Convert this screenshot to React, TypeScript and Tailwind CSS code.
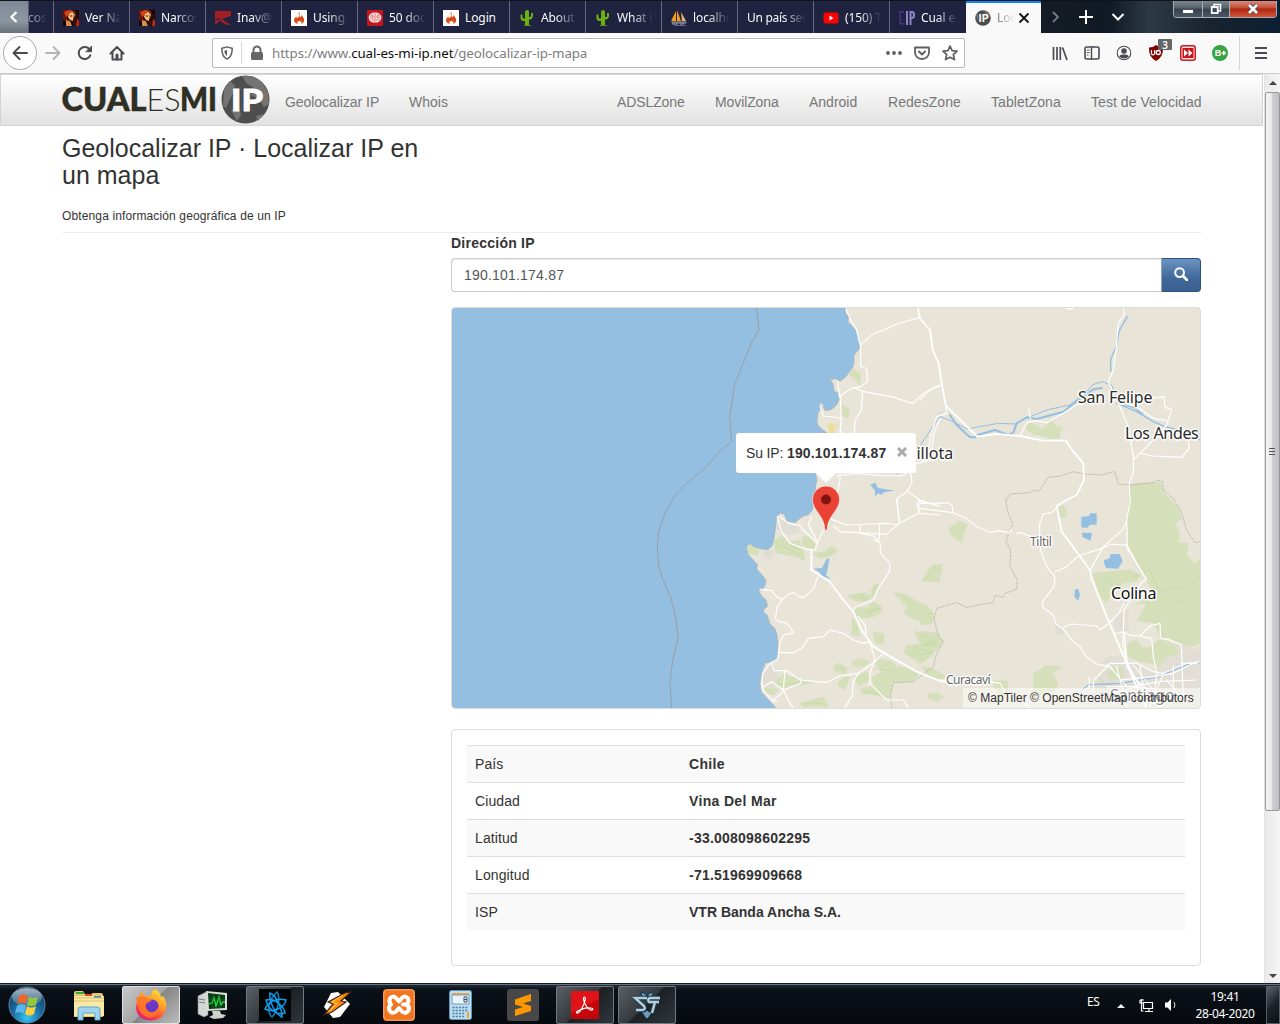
import React from "react";

type IconProps = { className?: string };

/* ---------- favicons ---------- */

const Portrait = () => (
  <svg viewBox="0 0 16 16" className="h-4 w-4 shrink-0">
    <rect width="16" height="16" fill="#1a0705" />
    <path d="M0 0h9l-4 5-1 6-4 2z" fill="#6b130a" />
    <path d="M1 2l5-2 5 1 3 4-3-2-4 1-4 3z" fill="#c8451a" />
    <path d="M6 4l3-2 3 2v4l-2 3-3-1-2-3z" fill="#f3bd78" />
    <path d="M9 1l6 4-3 4 1 6-3 1V9l2-4z" fill="#3a120a" />
    <path d="M3 10l4 1 2 5H3z" fill="#d98a4d" />
    <path d="M7 6h2M10 6h1" stroke="#4a160a" />
    <path d="M0 10l3 2v4H0z" fill="#120403" />
    <path d="M14 8l2 3v5h-3z" fill="#c02a10" />
  </svg>
);
const RedFlag = () => (
  <svg viewBox="0 0 16 16" className="h-4 w-4 shrink-0">
    <path d="M0 1h16v5L8 8.500q-1 .5 0 1.200L16 15q-5 .5-8-2L5.500 10.500 0 15z" fill="#a31d25" />
    <path d="M0 9.500l6-1.500-1 1.500-5 1z" fill="#202340" />
  </svg>
);
const Flame = () => (
  <svg viewBox="0 0 16 16" className="h-4 w-4 shrink-0">
    <rect width="16" height="16" fill="#fff" />
    <path d="M8 2c2 2-1 3 1 5 1 1 1-1 1-2 2 2 4 4 3 6-.5 2-2 2.500-3 3 1-2 0-3-1-3s-1 1-2 0c-1 1-1 2 0 3-2-.5-4-1.500-4-4 0-2 2-2 2-4 1 1 0 2 1 2C9 7 7 5 8 2z" fill="#dd4814" />
  </svg>
);
const Brain = () => (
  <svg viewBox="0 0 16 16" className="h-4 w-4 shrink-0">
    <rect width="16" height="16" rx="1" fill="#c4161c" />
    <ellipse cx="8" cy="7.500" rx="6.400" ry="5.200" fill="#fbdedd" />
    <path d="M8 2v11M3 6h3v2H3M5 4v2M13 6h-3v2h3M11 4v2M5 10h2M9 10h3" stroke="#d8565a" strokeWidth=".7" fill="none" />
  </svg>
);
const Cactus = () => (
  <svg viewBox="0 0 16 16" className="h-4 w-4 shrink-0">
    <path d="M6 16V11H4.500Q1.500 11 1.500 8V4.500h2V7q0 1.500 1.500 1.500h1V2q0-2 2-2t2 2v5h1q1 0 1-1V3h2v3.500Q13 9.500 11 9.500h-1V16z" fill="#6db012" />
    <path d="M5 15.500h7" stroke="#55900f" />
  </svg>
);
const Sails = () => (
  <svg viewBox="0 0 16 16" className="h-4 w-4 shrink-0">
    <path d="M5 1v10H0zM6 0l4 11H6z" fill="#f89c0e" />
    <path d="M10 2l5 9h-4z" fill="#e8b878" />
    <path d="M1 12h14v1H1zM1 14h3v2M6 13v3h4v-3M12 13v3h3" stroke="#9999ad" fill="none" />
  </svg>
);
const YouTube = () => (
  <svg viewBox="0 0 16 16" className="h-4 w-4 shrink-0">
    <rect x=".5" y="2.500" width="15" height="11" rx="2.500" fill="#f00" />
    <path d="M6.500 5.500v5l4-2.500z" fill="#fff" />
  </svg>
);
const CIP = () => (
  <svg viewBox="0 0 16 16" className="h-4 w-4 shrink-0" fill="none">
    <path d="M5 1.800H1.200v12H5" stroke="#4a2f8f" strokeWidth="1.600" />
    <path d="M8 1v14" stroke="#8c86c8" strokeWidth="2" />
    <path d="M11.500 15V2h1.500q2 0 2 3t-2 3h-1.500" stroke="#8c86c8" strokeWidth="2" />
  </svg>
);
const RoundIP = () => (
  <svg viewBox="0 0 16 16" className="h-4 w-4 shrink-0">
    <circle cx="8" cy="8" r="7.800" fill="#4d4d4d" />
    <path d="M9 0.500l5 3 1 4-3-1zM1 5l2-2v8z" fill="#777" />
    <text x="3.600" y="11.800" fontFamily="Lato" fontWeight="900" fontSize="10.500" fill="#fff">IP</text>
  </svg>
);

type TabData = { title: string; icon?: () => React.ReactElement };

const tabs: TabData[] = [
  { title: "Ver Nar", icon: Portrait },
  { title: "Narcos", icon: Portrait },
  { title: "Inav@tec", icon: RedFlag },
  { title: "Using C", icon: Flame },
  { title: "50 docu", icon: Brain },
  { title: "Login", icon: Flame },
  { title: "About C", icon: Cactus },
  { title: "What is", icon: Cactus },
  { title: "localhos", icon: Sails },
  { title: "Un país sera" },
  { title: "(150) Tr", icon: YouTube },
  { title: "Cual es", icon: CIP },
];

function TabStrip() {
  return (
    <div className="flex h-[33px] border-t border-[#11131c] bg-[linear-gradient(90deg,#7f8c9a_0,#8b929b_28px,#202340_29px,#202340_965px,#141b24_1041px,#101a24_1110px,#2d3943_1150px,#18232e_1210px,#0b1f33_1280px)]">
      <div className="flex w-7 items-center justify-center bg-[linear-gradient(180deg,#7d8995,#8d97a2_60%,#69727b)] text-white">
        <svg viewBox="0 0 12 16" className="h-4 w-3" fill="none" stroke="currentColor" strokeWidth="2.200"><path d="M8.500 3l-5 5 5 5" /></svg>
      </div>
      <div className="flex w-[25px] items-center overflow-hidden pt-0.5 text-[12px] text-[#9296a8] [mask-image:linear-gradient(90deg,black_30%,transparent_75%)]">cos</div>
      {tabs.map((t, i) => (
        <div key={i} className="flex w-[76px] shrink-0 items-center gap-1.5 border-l border-[#686a80] pt-0.5 pl-[9px] text-[12px] tracking-[-0.100px] text-[#f9f9fa]">
          {t.icon && <t.icon />}
          <span
            className={
              t.icon
                ? "w-[38px] overflow-hidden whitespace-nowrap pb-px " + (t.title === "Login" ? "" : "[mask-image:linear-gradient(90deg,black_40%,transparent_95%)]")
                : "w-[60px] overflow-hidden whitespace-nowrap pb-px tracking-[-0.300px] [mask-image:linear-gradient(90deg,black_60%,transparent_98%)]"
            }
          >
            {t.title}
          </span>
        </div>
      ))}
      <div className="ml-px flex w-[75px] shrink-0 items-center border-t-2 border-[#0a84ff] bg-[#f9f9fa] pl-[9px] text-[12px] text-[#222]">
        <RoundIP />
        <span className="ml-1.5 w-[18px] overflow-hidden whitespace-nowrap [mask-image:linear-gradient(90deg,#0009,transparent)]">Loca</span>
        <svg viewBox="0 0 12 12" className="ml-[3px] h-3 w-3" stroke="#111" strokeWidth="1.800"><path d="M1.500 1.500l9 9M10.500 1.500l-9 9" /></svg>
      </div>
      <div className="flex w-[132px] shrink-0 items-center pl-[9px]">
        <svg viewBox="0 0 12 16" className="h-4 w-3" fill="none" stroke="#737b84" strokeWidth="1.800"><path d="M3 3l5 5-5 5" /></svg>
        <svg viewBox="0 0 16 16" className="ml-[16px] h-4 w-4" stroke="#fff" strokeWidth="2"><path d="M8 1v14M1 8h14" /></svg>
        <svg viewBox="0 0 16 16" className="ml-[16px] h-4 w-4" fill="none" stroke="#fff" strokeWidth="2"><path d="M2.500 5l5.500 5.500L13.500 5" /></svg>
      </div>
      <div className="flex h-[17px] w-[104px] shrink-0 overflow-hidden rounded-b-[4px] border border-t-0 border-[#a7afb6]">
        <div className="flex w-[29px] items-center justify-center border-r border-[#a7afb6] bg-[linear-gradient(180deg,#7b858d,#566069_45%,#343f49_50%,#4b5864)]">
          <div className="mt-1 h-[5px] w-[12px] rounded-[1px] border border-[#4a4f55] bg-white" />
        </div>
        <div className="flex w-[27px] items-center justify-center border-r border-[#a7afb6] bg-[linear-gradient(180deg,#7b858d,#566069_45%,#343f49_50%,#4b5864)]">
          <svg viewBox="0 0 12 12" className="h-3 w-3" fill="none"><path d="M4 4V1.500h6.500V8H8" stroke="#fff" strokeWidth="1.600" /><rect x="1.700" y="4" width="6" height="6" stroke="#fff" strokeWidth="1.800" /></svg>
        </div>
        <div className="flex flex-1 items-center justify-center bg-[linear-gradient(180deg,#d98c7c,#c4503a_42%,#ad2810_50%,#d5533a)]">
          <svg viewBox="0 0 14 12" className="h-3 w-3.5"><path d="M3 2l8 8M11 2l-8 8" stroke="#53424a" strokeWidth="4.200" /><path d="M3 2l8 8M11 2l-8 8" stroke="#fff" strokeWidth="2.600" /></svg>
        </div>
      </div>
    </div>
  );
}

/* ---------- toolbar ---------- */

const Slot = ({ children }: { children: React.ReactNode }) => <div className="relative flex w-8 shrink-0 items-center justify-center">{children}</div>;

const Glyph = ({ children, className = "h-4 w-4" }: IconProps & { children: React.ReactNode }) => (
  <svg viewBox="0 0 16 16" className={className} fill="none" stroke="currentColor" strokeWidth="2" strokeLinecap="round" strokeLinejoin="round">
    {children}
  </svg>
);

function Toolbar() {
  return (
    <div className="flex h-[41px] items-center border-b border-[#ccc] bg-[#f9f9fa] text-[#4a4a4f]">
      <div className="ml-[3px] flex h-[34px] w-[34px] shrink-0 items-center justify-center rounded-full border border-[#aaa] bg-white">
        <Glyph><path d="M15 8H1.500M7.500 2l-6 6 6 6" /></Glyph>
      </div>
      <Slot><Glyph className="h-4 w-4 text-[#b5b5b7]"><path d="M1 8h13.500M8.500 2l6 6-6 6" /></Glyph></Slot>
      <Slot><Glyph><path d="M13.300 10.300A6 6 0 1 1 12.600 4.500" /><path d="M14.500 1.500v5.200H9.300z" fill="currentColor" strokeWidth="1" /></Glyph></Slot>
      <Slot><Glyph><path d="M1.500 8.500L8 2l6.500 6.500M3.500 8v6.500h9V8M8 14v-3.500" /><path d="M8 10v4" strokeWidth="3" /></Glyph></Slot>
      <div className="ml-[79px] flex h-[30px] w-[753px] shrink-0 items-center rounded-[2px] border border-[#b8b8bc] bg-white">
        <div className="flex w-[28px] items-center justify-center text-[#5f5f63]">
          <Glyph className="h-[14px] w-[14px]"><path d="M8 1c2 1 4 1.300 6 1.500C14 8 13 12.500 8 15 3 12.500 2 8 2 2.500 4 2.300 6 2 8 1z" strokeWidth="1.700" /><path d="M8 4.500v7c-2-1.500-3-3.500-3-6z" fill="currentColor" stroke="none" /></Glyph>
        </div>
        <div className="h-[22px] w-px bg-[#d7d7db]" />
        <div className="flex w-[29px] items-center justify-center text-[#666]">
          <svg viewBox="0 0 16 16" className="h-4 w-4"><rect x="2" y="7" width="12" height="8" rx="1.500" fill="currentColor" /><path d="M4.500 8V5a3.500 3.500 0 0 1 7 0v3" fill="none" stroke="currentColor" strokeWidth="2" /></svg>
        </div>
        <div className="flex-1 pt-0.5 pl-px text-[13.300px] tracking-[-0.090px] text-[#7d7d7f]">
          https://www.<span className="text-[#0c0c0d]">cual-es-mi-ip.net</span>/geolocalizar-ip-mapa
        </div>
        <div className="flex w-[28px] justify-center"><svg viewBox="0 0 16 16" className="h-4 w-4" fill="#5f5f63"><circle cx="2" cy="8" r="1.900" /><circle cx="8" cy="8" r="1.900" /><circle cx="14" cy="8" r="1.900" /></svg></div>
        <div className="flex w-[28px] justify-center text-[#5f5f63]"><Glyph><path d="M1 2.500h14v5a7 6.500 0 0 1-14 0z" strokeWidth="1.800" /><path d="M5 6.500l3 3 3-3" /></Glyph></div>
        <div className="flex w-[28px] justify-center text-[#5f5f63]"><Glyph><path d="M8 1l2.100 4.700 5 .5-3.800 3.400 1.200 5L8 12.200l-4.500 2.400 1.200-5L1 6.200l5-.5z" strokeWidth="1.700" /></Glyph></div>
      </div>
      <div className="ml-[79px] flex h-full">
        <Slot><svg viewBox="0 0 16 16" className="h-4 w-4" stroke="currentColor" strokeWidth="1.700"><path d="M1.500 2v13M5 2v13M8.300 2v13M10.500 2.500L15 15" /></svg></Slot>
        <Slot><Glyph><rect x="1" y="2" width="14" height="12" rx="1.500" strokeWidth="1.600" /><path d="M7.500 2v12" strokeWidth="1.400" /><path d="M3.200 5h2M3.200 7.500h2M3.200 10h1" strokeWidth=".9" /></Glyph></Slot>
        <Slot><Glyph><circle cx="8" cy="8" r="6.800" strokeWidth="1.100" /><circle cx="8" cy="6" r="2.800" fill="currentColor" stroke="none" /><path d="M3.300 11.500q1-2 3-2h3.400q2 0 3 2Q11 13.600 8 13.600t-4.700-2.100z" fill="currentColor" stroke="none" /></Glyph></Slot>
        <Slot>
          <svg viewBox="0 0 16 16" className="h-4 w-4"><path d="M8 0q3 2.500 7 2.500Q15.500 12 8 16 .5 12 1 2.500 5 2.500 8 0z" fill="#800000" /><path d="M3.500 5v3.200a1.600 1.600 0 0 0 3.200 0V5" fill="none" stroke="#fff" strokeWidth="1.200" /><circle cx="10.300" cy="7.500" r="2" fill="none" stroke="#fff" strokeWidth="1.300" /></svg>
          <span className="absolute top-[6px] left-[18px] flex h-[11px] w-[14px] items-center justify-center rounded-[1px] bg-[#666] text-[10px] font-semibold leading-none text-white">3</span>
        </Slot>
        <Slot><svg viewBox="0 0 16 16" className="h-4 w-4"><rect width="16" height="16" rx="3" fill="#d0191e" /><rect x="1.500" y="1.500" width="13" height="13" rx="1.500" fill="#efe2e1" /><rect x="2.500" y="3" width="11" height="10" fill="#c3161b" /><path d="M4 4.500l4 3.500-4 3.500zM8.500 4.500l4 3.500-4 3.500z" fill="#fff" /></svg></Slot>
        <Slot><svg viewBox="0 0 16 16" className="h-4 w-4"><circle cx="8" cy="8" r="8" fill="#38a343" /><text x="2.800" y="11.300" fontFamily="Liberation Sans" fontWeight="700" fontSize="9" fill="#fff">B</text><path d="M11.800 5.800v4.400M9.600 8H14" stroke="#fff" strokeWidth="1.500" /></svg></Slot>
        <div className="mt-[3px] ml-[3px] h-[34px] w-px shrink-0 bg-[#d7d7db]" />
        <div className="flex w-[40px] shrink-0 items-center justify-center pl-0.5"><svg viewBox="0 0 12 12" className="h-3 w-3" stroke="currentColor" strokeWidth="2"><path d="M0 1h12M0 6h12M0 11h12" /></svg></div>
      </div>
    </div>
  );
}

/* ---------- site header ---------- */

function SiteNav() {
  return (
    <nav className="flex h-[52px] w-[1263px] items-center border border-[#d4d4d4] bg-[linear-gradient(180deg,#fff,#e2e2e2)] text-[14px] text-[#777]">
      <svg viewBox="62 75 208 50" className="ml-[61px] h-[50px] w-[208px] shrink-0" fontFamily="Lato">
        <g fill="#2f2f24" stroke="#2f2f24">
          <text x="61.500" y="111.300" fontSize="31.500" fontWeight="900" strokeWidth=".5" textLength="85" lengthAdjust="spacingAndGlyphs">CUAL</text>
          <text x="146.500" y="111.300" fontSize="31.500" fontWeight="300" strokeWidth="0" textLength="34" lengthAdjust="spacingAndGlyphs">ES</text>
          <text x="180" y="111.300" fontSize="31.500" fontWeight="900" strokeWidth=".5" textLength="37" lengthAdjust="spacingAndGlyphs">MI</text>
        </g>
        <circle cx="245.500" cy="99.500" r="24" fill="#4e4e4e" />
        <path d="M242 76l10 0 10 6 6 10 1 12-5 3-5-8-8-4 2-8-6-3zM224 90l6-9 5 5-3 9-6 13-3-2zM231 110l8-3 2 8-4 6zM256 116l8-2-6 7z" fill="#747474" />
        <text x="231" y="110.500" fontSize="31" fontWeight="900" fill="#fff" stroke="#fff" strokeWidth=".8" textLength="32" lengthAdjust="spacingAndGlyphs">IP</text>
      </svg>
      <div className="ml-[15px] flex pt-1">
        <a className="w-[124px] tracking-[-0.050px]">Geolocalizar IP</a>
        <a>Whois</a>
      </div>
      <div className="ml-auto grid grid-cols-[98px_94px_79px_103px_100px_111px] pt-1 pr-[60px] whitespace-nowrap">
        <a className="tracking-[-0.100px]">ADSLZone</a>
        <a className="tracking-[-0.100px]">MovilZona</a>
        <a>Android</a>
        <a className="tracking-[0.050px]">RedesZone</a>
        <a className="tracking-[0.050px]">TabletZona</a>
        <a className="tracking-[0.050px]">Test de Velocidad</a>
      </div>
    </nav>
  );
}

/* ---------- map ---------- */

function MapView() {
  return (
    <div className="relative h-[402px] overflow-hidden rounded-[4px] border border-[#ddd]">
      <svg viewBox="-564 24 2244 1200" className="block h-[400px] w-[748px]" fill="none" strokeLinejoin="round" strokeLinecap="round">
        <rect x="-564" y="24" width="2244" height="1200" fill="#94bfe1" />
        <path
          d="M615 20L617 42 626 47 624 65 636 77 646 90 654 108 658 128 657 148 648 158 642 166 642 188 638 202 624 222 614 234 600 244 588 236 570 240 580 252 582 274 594 278 599 296 590 314 576 328 556 332 550 322 550 312 544 308 538 310 544 326 534 338 531 368 537 380 550 390 562 400 556 430 536 460 530 500 526 520 531 540 526 560 528 580 520 600 518 630 505 644 490 648 474 660 465 668 445 670 438 656 432 642 422 640 410 648 407 680 402 716 396 738 384 749 366 747 340 741 325 732 320 745 325 764 340 780 352 794 350 808 366 824 378 842 374 860 364 870 355 872 365 888 378 900 383 918 372 928 370 936 382 946 390 972 404 985 410 1000 414 1030 412 1074 398 1086 372 1090 376 1102 364 1124 360 1150 364 1176 378 1192 392 1206 412 1228H1684V20z"
          fill="#e8e4d8" stroke="#a9b4b3" strokeWidth="2"
        />

        {/* maritime boundary */}
        <path d="M349 24L357 88 333 132 284 252 269 354 275 424 236 456 192 508 152 538 108 582 76 636 55 698 52 750 56 796 68 838 93 892 106 950 115 1010 98 1082 90 1148 95 1226" stroke="#999" strokeWidth="2.500" />

        {/* built-up areas */}
        <g fill="#e0ddd5">
          <path d="M880 344l30-12v20zM420 660l50 10 10 26-40 10-30-20zM370 750l30 4-4 22-30-8zM370 1100l30-4 20 40-20 40-34-20z" />
          <g transform="translate(840 600)">
            <path d="M590 345L625 330 625 390 590 395 580 370zM402 375L432 380 430 405 410 403zM540 490L570 468 620 470 600 495zM530 540L570 495 650 490 700 515 760 430 800 440 840 450 840 626 530 626 500 590z" opacity=".85" />
          </g>
        </g>

        {/* vegetation */}
        <g fill="#d5dfba">
          <path d="M640 204l22 18v36l-34-34zM603 312l28 16-8 28-18-12z" />
          <path d="M1156 384L1170 364 1190 376 1206 388 1222 372 1236 360 1248 378 1268 384 1258 400 1262 416 1230 416 1210 408 1180 404z" />
          <g transform="translate(0 600)">
            <path d="M320 140L332 132 344 144 360 150 354 166 326 162zM402 122L426 106 444 126 478 120 492 150 496 182 470 172 406 158zM488 106L512 112 526 130 524 152 486 136zM514 160L556 154 576 136 594 154 574 168 538 176z" />
            <path d="M622 286L660 278 692 284 700 254 718 250 716 274 694 296 668 306 640 302zM650 322L680 322 700 304 728 320 722 340 700 352 650 358 638 340zM636 352L650 366 660 410 634 404zM700 396L734 400 732 434 706 430 700 410zM758 276L794 282 830 302 866 320 884 358 872 374 820 358 790 340 800 322zM820 392L860 402 898 400 900 440 840 492 790 458 800 436 840 432zM846 244L864 206 900 192 900 246zM578 498L598 488 622 508 618 522 586 516zM636 484L664 474 692 486 670 500 640 500zM594 548L612 530 630 532 614 570 594 560zM642 534L680 512 690 534 680 550 656 558zM716 476L756 482 770 500 796 500 826 514 840 518 820 544 758 550 748 600 700 560 696 532 724 516 708 492zM404 548L430 520 450 528 520 550 470 556 426 566zM372 562L416 568 402 586 376 580zM478 608L500 606 520 596 550 590 560 606 566 622 490 620zM662 564L700 558 736 580 738 594 700 584 668 582zM862 584L890 578 900 580 900 606 870 598z" />
          </g>
          <g transform="translate(840 600)">
            <path d="M630 -44L660 -52 720 -55 735 -20 775 25 785 55 765 75 780 95 775 125 805 130 800 165 825 190 840 175V430L815 440 780 435 740 410 725 420 700 370 650 362 680 310 640 315 700 285 680 240 625 150 620 60z" />
            <path d="M416 20L430 14 442 40 436 54 420 50 412 34zM86 84L118 62 142 74 124 128 94 108zM6 240L34 196 68 192 66 220 40 246zM0 312L38 330 42 362 20 374 0 374zM0 394L50 398 74 424 44 440 34 470 0 492zM516 220L630 208 665 228 640 248 610 250 570 288 562 310 540 290zM340 520L378 496 430 500 396 518 416 550 400 580 380 574 340 600zM620 432L650 418 666 442 690 442 724 414 760 436 780 458 730 480 720 500 690 490 660 486 620 468zM20 582L44 578 78 592 46 602zM216 542H264V582L240 596zM560 512L612 500 608 540 570 538zM0 498L30 502 74 524 74 540 30 532z" />
          </g>
        </g>
        <g transform="translate(0 600)" stroke="#bdd796" strokeWidth="1.500">
          <path d="M404 125L470 160 490 178M440 130L480 150M540 168L580 155M640 290L684 298 664 284 710 262M660 340L720 325 680 345 708 318M790 290L854 340 880 342M830 400L890 430 820 440 880 460 810 464M590 505h30M704 505L764 515 724 545M490 610h60M660 570l70 18M636 366l20 24M854 240L884 205 M410 555L480 548" />
          <path d="M1480 230L1530 210 1560 280 1600 260 1630 270 1680 230M1600 300L1650 320M1370 520l20 30" />
          <path d="M850 402l40 18-36 12 50 6M1400 225l70 60M1392 230l40 40" />
        </g>
        <path d="M564 372l14-4 4 10 16-6-16 18v10h-16z" fill="#ebdf98" />

        {/* water */}
        <path d="M690 554l16-6 8 16 50 8-30 4-10 8-10-4-8 10-2-20zM736 520l20 8 24-8-20 10zM520 806l26-2 14-28 8 0-6 36-4 14 14 10-24-6-10-14z" fill="#94bfe1" />
        <path transform="translate(840 600)" d="M484 50l24-2 2-8h20v34l-20 0-8 10-18-2zM486 98l30 0-4 24-24-10zM552 180l16-4 4-14h26l10 22-14 22-36-2-6-14zM464 270l10-4 6 18-6 18-10-10z" fill="#94bfe1" />
        <g transform="translate(840 0)" stroke="#94bfe1">
          <path d="M2 434L45 370 60 350 100 365 140 387 235 370 285 372 310 358 380 330 450 315 500 275 520 253 548 245 575 255 590 300" strokeWidth="3" />
          <path d="M90 345L110 375 150 412H166L172 405 225 390 265 405 280 398 290 370 320 352 350 357 430 335 475 300 520 268 545 264" strokeWidth="6" />
          <path d="M590 310L650 335 700 365 735 380 760 386 840 420M600 312L640 322 668 342M572 214V178L588 142 598 92 622 50" strokeWidth="4" />
          <path d="M480 1178L506 1154 560 1152 600 1150 720 1130 760 1110 820 1088H840" strokeWidth="4" />
        </g>

        {/* administrative boundaries */}
        <g transform="translate(840 0)" stroke="#b5b4a7" strokeWidth="2.500" strokeDasharray="6 5">
          <path d="M258 600L270 582 330 578 340 570 355 575 385 532 420 528 460 515 495 522 540 525 585 515 595 552 630 555 700 548 710 540 728 545 730 570 760 595 780 630 785 640 800 690 825 728 840 725" />
          <path d="M258 600L262 630 278 675 268 690 258 725 272 750 270 800 292 840 290 868 255 880 250 892 225 885 218 908 190 912 140 922 110 908 50 925 42 955 55 1010 70 1025 50 1060 40 1100 0 1130 -20 1145 -80 1148 -88 1180 -85 1226" />
        </g>

        {/* minor roads */}
        <g stroke="#fff" strokeWidth="3.500">
          <path d="M618 28L634 64 650 90 658 126 662 134 702 100 726 92 770 72 840 52M662 136V198L680 206 683 244 663 260 638 264 608 282 598 292 594 244M640 264L670 274 730 286 756 290 790 302 820 310 850 280 900 256M668 274L664 330 646 360 642 400M600 284L604 354 600 396M540 318L550 348 606 354M604 392L600 540 592 580" />
          <path d="M590 528L650 520 740 528 790 526 830 490 870 480 882 400 900 356M812 520L816 548 800 576 770 596 778 660M800 572L840 600 890 616" />
          <g transform="translate(0 600)">
            <path d="M580 78L600 95 740 103 775 72 835 40 838 0M575 58L620 75 690 72 740 70 772 75M770 0L778 70M412 50L425 95 450 130 500 148 525 150 532 130 490 90 480 76 445 70 420 50M515 50L505 75 525 110 532 130 550 90 M660 72V95M718 75V98M830 10L840 40 900 45M832 2L900 18" />
            <path d="M660 100L700 108 720 128 722 160 750 190 748 215 715 265 700 300 650 320 636 332M720 98L715 125 700 120" />
            <path d="M360 268L395 272 412 292 428 298 445 283 462 278 475 290 490 293 520 268 530 240 535 228M428 298L412 320 406 355 415 365 440 368 460 398 430 405 420 430 416 458 462 458 490 440 505 415 550 410 570 390 610 400 640 420 670 430 690 425M416 460L412 478 390 490 368 520 366 565 395 600 410 605 M395 490L402 512 440 512 480 540 560 547 600 528 655 520 705 485 730 460M655 520L640 545 636 590 615 622M690 430L705 475 690 520 690 550 715 575 740 600 790 600 805 622M435 512L430 570 445 600 458 622M482 535V550L430 570 395 545 370 560M430 575L395 605" />
            <path d="M655 350L676 376 678 410" />
          </g>
          <g transform="translate(840 0)">
            <path d="M0 300L30 268 66 254M78 318L80 340 50 350 34 400 20 480 0 490M300 408L320 368 350 362 380 368 430 340 480 308M326 326L332 356M610 24L612 45 595 70 588 150 580 210 565 245 600 320 625 380 640 470 640 520 628 550 630 600M640 480L660 460 700 420 740 375 755 328 735 322 732 290 690 296M660 460L700 468 785 472 808 445 806 425M600 306L650 320 700 355 738 362M435 24L450 28 462 24" />
          </g>
          <g transform="translate(840 600)">
            <path d="M0 10H50L85 8 98 20V38L0 25M98 38L140 55 170 80 210 97 235 92 268 98 275 88M290 100L300 98 330 108 360 115" />
            <path d="M410 22L395 38 370 42 358 75 362 150 380 200 405 230 402 260 368 305 368 322 400 345 408 372 430 388 460 425 480 440 500 472 530 492 570 500M430 382L455 372 530 378 540 390 568 370 600 335 612 310M405 215L440 200 475 168 545 145 575 133 620 135M620 66L605 92 550 140 510 210" />
            <path d="M632 -4L620 60 622 145 672 225 680 238 666 245 630 300 612 330 610 400 608 430 620 490M582 402L610 395 630 406 660 408 690 378 720 370 722 415 750 420 784 434 786 490 830 490M660 408L695 415 700 470 710 520 705 570M508 532V560L480 580M522 540L570 490 650 490 700 515 730 520 800 490 840 485" />
            <path d="M570 500L620 560 700 566M600 540L700 530 760 520 820 490M560 560H640L720 545 830 540M620 500L650 540 690 575M640 495L700 570M660 500L680 620M590 500L620 620M730 520L690 620M760 500V570L700 610M786 490L790 600M740 540L800 610M550 590L640 600 700 590M600 580L640 560" />
            <path d="M60 540H100M210 545L240 550 256 580 300 600 330 625M520 545V575" />
          </g>
        </g>

        {/* highways */}
        <g stroke="#fff" strokeWidth="5.500">
          <path d="M833 20L840 55 870 90 878 150 896 190 905 250 918 318 1012 410 1070 402 1140 408 1210 422 1278 422 1295 448 1330 490 1332 540 1310 585 1280 600 1250 618 1265 695 1350 810 1355 835 1400 950 1460 1090 1490 1160 1520 1226" />
          <path d="M515 750L514 810 570 845 610 900 640 935 665 990 700 1040 760 1075 830 1115 900 1143 960 1150" />
          <path d="M1460 735L1510 825M1452 1000L1462 1090 1500 1160" strokeWidth="4" />
        </g>
      </svg>

      {/* place names */}
      <div className="absolute inset-0 font-['Noto_Sans'] leading-none whitespace-nowrap text-[#2b2b2b] [text-shadow:0_0_2px_#fff,0_0_3px_#fff,1.500px_0_1px_#fff,-1.500px_0_1px_#fff,0_1.500px_1px_#fff,0_-1.500px_1px_#fff,1px_1px_1px_#fff,-1px_-1px_1px_#fff]">
        <span className="absolute top-[81px] left-[626px] text-[16px] tracking-[-0.200px]">San Felipe</span>
        <span className="absolute top-[117px] left-[673px] text-[16px] tracking-[-0.350px]">Los Andes</span>
        <span className="absolute top-[137px] left-[442px] text-[16px]">Quillota</span>
        <span className="absolute top-[277px] left-[659px] text-[16px] tracking-[-0.300px] text-[#111]">Colina</span>
        <span className="absolute top-[228px] left-[578px] text-[12px] tracking-[-0.300px] text-[#666]">Tiltil</span>
        <span className="absolute top-[366px] left-[494px] text-[12px] tracking-[-0.500px] text-[#666]">Curacaví</span>
        <span className="absolute top-[379px] left-[658px] text-[16px] tracking-[-0.200px] text-[#222]">Santiago</span>
      </div>

      <div className="absolute right-0 bottom-0 h-5 w-[237px] bg-white/50 pl-[5px] text-[12px] leading-5 tracking-[0.030px] whitespace-nowrap text-[#333]">
        © MapTiler © OpenStreetMap contributors
      </div>

      <svg viewBox="0 0 28 46" className="absolute top-[177px] left-[360px] h-[46px] w-7">
        <path d="M14 45.800q-1.200 0-1.400-3C12 31 .4 25 .4 14.500a13.600 13.600 0 0 1 27.200 0C27.600 25 16 31 15.400 42.800q-.2 3-1.400 3z" fill="#ea4335" stroke="#fff" strokeWidth=".6" />
        <circle cx="14" cy="14.500" r="5" fill="#811411" />
      </svg>
      <div className="absolute top-[125px] left-[284px] flex h-10 w-[180px] items-center rounded-[3px] bg-white pl-[10px] text-[14px] text-[#333]">
        <span className="tracking-[-0.150px]">Su IP:&nbsp;</span>
        <b className="tracking-[0.150px]">190.101.174.87</b>
        <svg viewBox="0 0 12 12" className="mb-0.5 ml-[10px] h-3 w-3" stroke="#aaa" strokeWidth="3"><path d="M2 2l8 8M10 2l-8 8" /></svg>
        <svg viewBox="0 0 20 10" className="absolute top-full left-[80px] h-[10px] w-5"><path d="M0 0h20L10 10z" fill="#fff" /></svg>
      </div>
    </div>
  );
}

const rows: [string, string, string][] = [
  ["País", "Chile", "tracking-[0.300px]"],
  ["Ciudad", "Vina Del Mar", "tracking-[0.340px]"],
  ["Latitud", "-33.008098602295", "tracking-[0.230px]"],
  ["Longitud", "-71.51969909668", "tracking-[0.230px]"],
  ["ISP", "VTR Banda Ancha S.A.", ""],
];

function Content() {
  return (
    <main className="pl-[62px] text-[#333]">
      <div className="h-[107px] w-[1140px] border-b border-[#eee]">
        <h1 className="w-[370px] pt-[9px] text-[25px] leading-[27px]">Geolocalizar IP · Localizar IP en un mapa</h1>
        <p className="mt-[19px] text-[12px] leading-[17px] tracking-[0.130px]">Obtenga información geográfica de un IP</p>
      </div>
      <div className="ml-[389px] w-[750px]">
        <label className="block h-[25px] text-[14px] leading-5 font-bold tracking-[0.240px]">Dirección IP</label>
        <div className="flex h-[34px]">
          <div className="flex flex-1 items-center rounded-l-[4px] border border-r-0 border-[#ccc] pl-3 text-[14px] tracking-[0.200px] text-[#555] shadow-[inset_0_1px_1px_rgba(0,0,0,0.075)]">190.101.174.87</div>
          <button className="flex w-10 items-center justify-center rounded-r-[4px] border border-l-[#8fa5bd] border-y-[#2b5080] border-r-[#2b5080] bg-[linear-gradient(180deg,#6b94c1,#40699b_60%,#3b6091)] pb-0.5">
            <svg viewBox="0 0 14 14" className="h-[14px] w-[14px]" fill="none" stroke="#fff"><circle cx="5.600" cy="5.600" r="4.400" strokeWidth="2" /><path d="M9 9l4 4" strokeWidth="2.600" strokeLinecap="round" /></svg>
          </button>
        </div>
        <div className="pt-[15px]"><MapView /></div>
        <div className="mt-5 h-[237px] rounded-[4px] border border-[#ddd] p-[15px] text-[14px]">
          {rows.map(([k, v, spacing], i) => (
            <div key={k} className={"flex h-[37px] items-center border-t border-[#ddd] px-2 " + (i % 2 ? "bg-white" : "bg-[#f9f9f9]")}>
              <span className="w-[214px] tracking-[0.100px]">{k}</span>
              <b className={spacing}>{v}</b>
            </div>
          ))}
        </div>
      </div>
    </main>
  );
}

function Scrollbar() {
  return (
    <div className="flex w-4 flex-col items-center border-l border-[#e3e3e3] bg-[linear-gradient(90deg,#e9e9e9,#f5f5f5)]">
      <div className="flex h-[18px] items-center"><svg viewBox="0 0 8 4" className="h-1 w-2"><path d="M4 0l4 4H0z" fill="#444" /></svg></div>
      <div className="-ml-px flex h-[719px] w-[15px] flex-col items-center justify-center gap-[2px] rounded-[2px] border border-[#979797] bg-[linear-gradient(90deg,#f5f5f5,#e6e6e8_45%,#cfcfd2_50%,#c0c0c6)]">
        <i className="h-px w-1.5 bg-[#555]" /><i className="h-px w-1.5 bg-[#555]" /><i className="h-px w-1.5 bg-[#555]" />
      </div>
      <div className="mt-auto flex h-[17px] items-center"><svg viewBox="0 0 8 4" className="h-1 w-2"><path d="M0 0h8L4 4z" fill="#444" /></svg></div>
    </div>
  );
}

/* ---------- taskbar ---------- */

const TaskButton = ({ active, lit, children }: { active?: boolean; lit?: boolean; children: React.ReactNode }) => (
  <div
    className={
      "flex h-[38px] w-[58px] shrink-0 items-center justify-center rounded-[2px] border " +
      (lit
        ? "border-[#dfe1e3] bg-[linear-gradient(135deg,#c9c9c9,#a5a5a5_48%,#858585_50%,#bdbdbd)]"
        : active
          ? "border-[#737980] bg-[linear-gradient(135deg,#5b6065,#34393e_48%,#1b2025_50%,#30363c)]"
          : "border-transparent")
    }
  >
    {children}
  </div>
);

function Taskbar() {
  return (
    <div className="flex h-10 items-center border-t border-[#66727e] bg-[linear-gradient(180deg,#222c38,#0b1118_12%,#060a0f)] shadow-[0_-1px_0_#141c25]">
      <svg viewBox="0 0 38 38" className="ml-2 h-[38px] w-[38px]">
        <defs>
          <radialGradient id="orb" cx=".5" cy=".85" r=".85"><stop offset="0" stopColor="#35c6f4" /><stop offset=".45" stopColor="#1b6fa6" /><stop offset="1" stopColor="#113453" /></radialGradient>
          <linearGradient id="gloss" x1="0" y1="0" x2="0" y2="1"><stop offset="0" stopColor="#fff" stopOpacity=".65" /><stop offset="1" stopColor="#fff" stopOpacity=".08" /></linearGradient>
        </defs>
        <circle cx="19" cy="19" r="18" fill="url(#orb)" stroke="#5d87a5" />
        <ellipse cx="19" cy="11" rx="15" ry="9" fill="url(#gloss)" />
        <path d="M11 10q5-3 9 0l-2 8q-4-3-9 0z" fill="#f0632a" />
        <path d="M21 10.500q4 3 9 0l-2 8.500q-5 2.500-9 0z" fill="#93c83e" />
        <path d="M9 19.500q4-3 9 0l-2 8q-5-3-9 0z" fill="#5bb5e8" />
        <path d="M19 20q4 3 9 0l-2 8q-5 3-9 0z" fill="#fccf3a" />
      </svg>
      <div className="ml-[14px] flex gap-[4px]">
        <TaskButton>
          <svg viewBox="0 0 34 32" className="h-8 w-[34px]">
            <path d="M2 4q0-2 2-2h7l2 3h6l2-1h8q2 0 2 2v22H2z" fill="#e8ca6c" />
            <path d="M2 7h30v20H2z" fill="#f9e9a5" /><path d="M4 3h8v2H4z" fill="#2fa83a" /><path d="M13 5h7v2h-7z" fill="#e2442b" /><path d="M22 7h7v2h-7z" fill="#3c8ed0" />
            <path d="M2 9h30M2 12h30" stroke="#dcbf68" /><path d="M6 31V21q0-3 3-3h16q3 0 3 3v10h-5v-7H11v7z" fill="#9ed4ef" stroke="#5aa5cc" />
          </svg>
        </TaskButton>
        <TaskButton lit>
          <svg viewBox="0 0 32 32" className="h-8 w-8">
            <defs><linearGradient id="fox" x1=".8" y1="0" x2=".2" y2="1"><stop offset="0" stopColor="#ffe63c" /><stop offset=".4" stopColor="#ff9a28" /><stop offset=".75" stopColor="#ff3a45" /><stop offset="1" stopColor="#d6168f" /></linearGradient></defs>
            <path d="M20 0q5 3 6 8l2-1q4 5 3 12-2 12-15 12.500Q3 31 1 20q0-7 4-14l1-4 4 5 6 0q0-5 4-7z" fill="url(#fox)" />
            <circle cx="17" cy="17" r="6.500" fill="#6b37c8" />
            <path d="M6 8l5 0q3 2 6 3-2 3-5 3-2 2-1 5 2 5 7 4 4-1 4-4 3 5-2 8-7 4-13-2-5-6-6-17z" fill="#ff7a24" opacity=".85" />
          </svg>
        </TaskButton>
        <TaskButton>
          <svg viewBox="0 0 32 30" className="h-[30px] w-8">
            <path d="M1 6l8-4 2 1v22l-4 2-6-3z" fill="#d4d7d4" stroke="#888" strokeWidth=".6" /><path d="M2 9l6 1M2 12l6 1" stroke="#777" />
            <path d="M9 1l21 2v17l-21 1z" fill="#d9dcd5" /><path d="M11 3l17 2v13l-16 1z" fill="#063c12" /><path d="M12 14l3-1 2-5 2 8 3-9 2 8 2-3h2" stroke="#27e044" fill="none" strokeWidth="1.300" /><path d="M11 9l17 1M16 4v15M22 5v14" stroke="#237c35" strokeWidth=".5" />
            <path d="M15 21h8l1 3 5 1-3 3-9 1-5-2 4-2z" fill="#cfd1ca" />
          </svg>
        </TaskButton>
        <TaskButton active>
          <svg viewBox="0 0 32 32" className="h-8 w-8"><rect width="32" height="32" fill="#030405" /><g fill="none" stroke="#129ded" strokeWidth="1.500"><path d="M11 4q5 2 8 9 4 8 4 15-6-3-9-10-4-8-3-14z" /><path d="M6 20q2-5 8-8t13-1q-1 6-8 9-6 3-13 0z" /><path d="M18 3q3 4 1 13-2 8-6 12-4-3-3-11 2-9 8-14z" opacity=".8" /><path d="M7 11q7-2 12 3 6 4 7 10-6 2-12-2-6-5-7-11z" /></g></svg>
        </TaskButton>
        <TaskButton>
          <svg viewBox="0 0 32 32" className="h-8 w-8"><path d="M10 4l7-1 12 12-10 13-7 1L3 18z" fill="#fff" /><path d="M24 4L7 13l5 2-9 11 8-3 14-10-5-1 10-9z" fill="#ff8a0d" stroke="#3c2819" strokeWidth="1.200" /><path d="M22 6l-11 7 5 2-9 8" stroke="#ffcf62" fill="none" /></svg>
        </TaskButton>
        <TaskButton>
          <svg viewBox="0 0 32 32" className="h-8 w-8">
            <rect width="32" height="32" rx="4" fill="#f27622" />
            <rect x=".8" y=".8" width="30.400" height="30.400" rx="3.500" fill="none" stroke="#f9a868" />
            <g fill="none" stroke="#fff" strokeWidth="4" strokeLinejoin="round" strokeLinecap="round"><path d="M8 15.500Q5.500 13 7 9.500q2.500-3.500 6-.5l3 3.500 3-3.500q3.500-3 6 .5 1.500 3.500-1.500 6 3.500 2.500 2 6-2.500 4-6.500 1L16 19l-3 3.500q-4 3-6.500-1-1.500-3.500 1.500-6z" /><path d="M20 15.500h4" /></g>
          </svg>
        </TaskButton>
        <TaskButton>
          <svg viewBox="0 0 24 30" className="h-[30px] w-6"><rect x=".5" y=".5" width="22" height="29" rx="2" fill="#b9def2" stroke="#5f98ba" /><path d="M3 3h17v2H3z" fill="#eea44a" /><path d="M3 5h17v9H3z" fill="#e9f5fc" stroke="#799db2" /><path d="M15 7h3v5h-3zM15 9.500h3" fill="none" stroke="#38516a" /><path d="M3.500 17.500h16M3.500 20.500h16M3.500 23.500h12M3.500 26.500h12" stroke="#557f9d" strokeWidth="1.700" strokeDasharray="2 1.200" /><path d="M18 22h2v6h-2z" fill="#f5a431" /></svg>
        </TaskButton>
        <TaskButton>
          <svg viewBox="0 0 32 32" className="h-8 w-8"><rect width="32" height="32" rx="3" fill="#484848" /><path d="M8 10.500L24 5v7l-8 2.500 8 2.500v5L8 27v-6.500l8-2.500-8-2.500z" fill="#ff9800" /></svg>
        </TaskButton>
        <TaskButton active>
          <svg viewBox="0 0 28 28" className="h-7 w-7"><rect width="28" height="28" fill="#c6050a" /><path d="M0 0h28v8L0 22z" fill="#e01418" /><path d="M13.500 6c2 0 0 7-3 12-2 4-5 5-5 3.500 0-2 8-5 14-4.500 4 .5 2 2.500 0 2-3-1-7-8-7-11 0-1 .3-2 1-2z" fill="none" stroke="#fff" strokeWidth="1.200" /></svg>
        </TaskButton>
        <TaskButton active>
          <svg viewBox="0 0 30 30" className="h-[30px] w-[30px]"><path d="M9 2l5 2v4h-4zM21 2l-5 2v4h4zM9 21l4 1 2-2 2 2 4-1-4 6-2 2-2-2z" fill="#6d9dbb" stroke="#153345" /><g fill="none"><path d="M15 8H3l9 8q2 4-2 4H4M28 8H18q-3 1-1 4h10M23 12l-3 11" stroke="#1e3c50" strokeWidth="4.500" /><path d="M15 8H3l9 8q2 4-2 4H4M28 8H18q-3 1-1 4h10M23 12l-3 11" stroke="#b4cdd9" strokeWidth="2.500" /></g></svg>
        </TaskButton>
      </div>
      <div className="ml-auto flex h-full items-center text-[12px] text-white">
        <span className="w-[30px] pb-[5px] text-[12px] tracking-[-0.400px]">ES</span>
        <svg viewBox="0 0 8 4" className="mt-[2px] h-1 w-2"><path d="M4 0l4 4H0z" fill="#eee" /></svg>
        <svg viewBox="0 0 16 16" className="ml-[14px] h-4 w-4" fill="none" stroke="#fff"><path d="M4.500 5.500h9v6h-9zM6 14.500h8M10 12v2M2.500 2v4M1 3h4M1 3v3h3M2.500 6v8h2" strokeWidth="1.200" /></svg>
        <svg viewBox="0 0 16 16" className="ml-[9px] h-4 w-4"><path d="M1 5.500h2.500L7 2v12l-3.500-3.500H1z" fill="#fff" /><path d="M10 5q2 3 0 6" stroke="#ddd" fill="none" /></svg>
        <div className="ml-[7px] w-[76px] text-center text-[12px] leading-[17px] tracking-[-0.350px]"><div>19:41</div><div>28-04-2020</div></div>
        <div className="ml-[3px] h-[38px] w-[14px] border border-[#565e66] bg-[linear-gradient(135deg,#5b6167,#1d2329_50%,#0b1015)]" />
      </div>
    </div>
  );
}

export default function App() {
  return (
    <div className="flex h-[1024px] w-[1280px] flex-col overflow-hidden bg-white font-['Liberation_Sans',sans-serif]">
      <div className="font-['Noto_Sans',sans-serif]">
        <TabStrip />
        <Toolbar />
      </div>
      <div className="flex h-[910px]">
        <div className="w-[1264px] overflow-hidden">
          <SiteNav />
          <Content />
        </div>
        <Scrollbar />
      </div>
      <div className="font-['Noto_Sans',sans-serif]"><Taskbar /></div>
    </div>
  );
}
